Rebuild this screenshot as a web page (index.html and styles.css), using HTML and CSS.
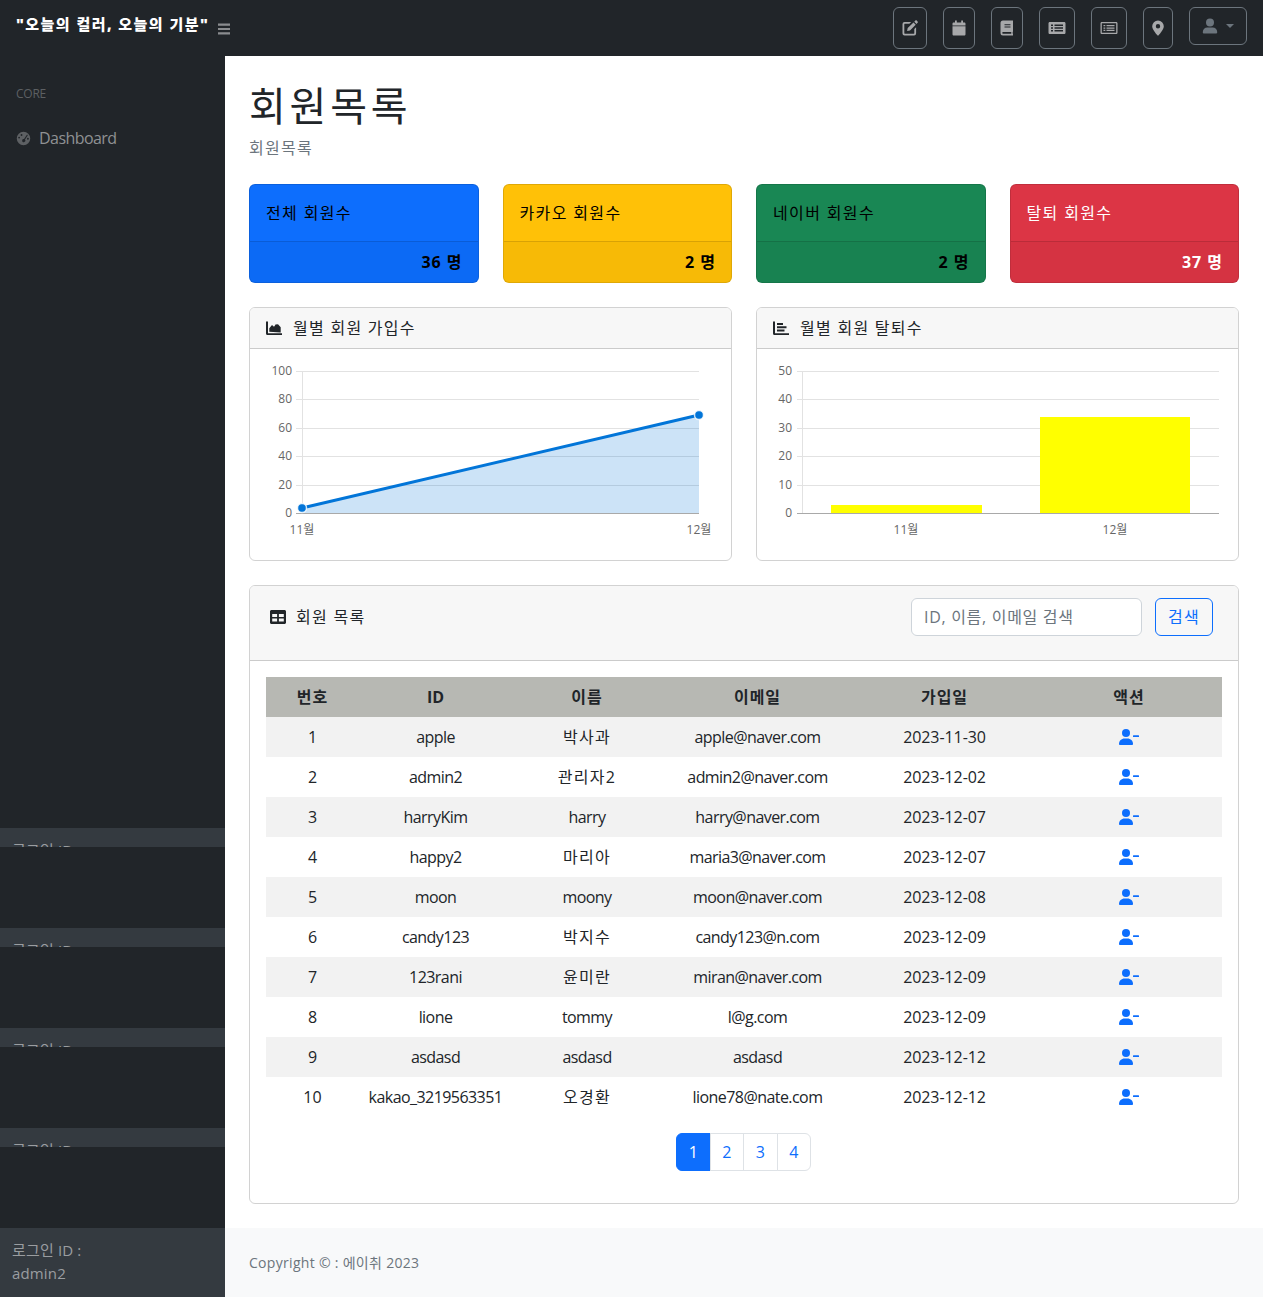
FILE: index.html
```html
<!DOCTYPE html>
<html lang="ko">
<head>
  <meta charset="UTF-8">
  <title>회원목록</title>
  <link rel="stylesheet" href="styles.css">
</head>
<body>
  <header class="topnav">
    <div class="brand">"오늘의 컬러, 오늘의 기분"</div>
    <svg class="toggle" viewBox="0 0 14 14"><path d="M1 1.500h12v2.200H1zM1 5.900h12v2.200H1zM1 10.300h12v2.200H1z"/></svg>
    <div class="nav-icons">
      <a class="nav-btn w34"><svg viewBox="0 0 16 16"><path d="M.5 4A2 2 0 0 1 2.500 2h6.700L7.400 3.800H2.800c-.3 0-.5.200-.5.500v9c0 .3.200.5.500.5h9c.3 0 .5-.2.500-.5V9l1.800-1.800v6A2.300 2.300 0 0 1 11.500 15.500h-9A2 2 0 0 1 .5 13.500zM13.400.6c.4-.4 1-.4 1.300 0l.9.900c.4.400.4 1 0 1.300l-1.100 1.100-2.200-2.200zM11.500 2.500l2.200 2.200L8 10.400l-2.900.6.600-2.900z"/></svg></a>
      <a class="nav-btn w32"><svg viewBox="0 0 16 16"><path d="M4 .5h1.800v2h4.400v-2H12v2h1.200c.8 0 1.300.5 1.300 1.300v1.700h-13V3.800c0-.8.500-1.300 1.300-1.300H4zM1.500 6.300h13v7.900c0 .8-.5 1.300-1.300 1.300H2.800c-.8 0-1.300-.5-1.300-1.300z"/></svg></a>
      <a class="nav-btn w32"><svg viewBox="0 0 16 16"><path fill-rule="evenodd" d="M4 .5h10v11c-.4.400-.4 2 0 2.400v1.600H4a2.500 2.500 0 0 1-2.500-2.500V3A2.500 2.500 0 0 1 4 .5zm1.500 3.700v1.100h6V4.200zm0 2.300v1.100h6V6.500zM4 12c-1 0-1 1.800 0 1.800h8.300c-.1-.6-.1-1.200 0-1.800z"/></svg></a>
      <a class="nav-btn w36"><svg class="wide" viewBox="0 0 18 16"><path fill-rule="evenodd" d="M1.800 2h14.400c.7 0 1.300.6 1.300 1.300v9.400c0 .7-.6 1.300-1.300 1.300H1.800c-.7 0-1.300-.6-1.300-1.300V3.300C.5 2.600 1.100 2 1.800 2zM3 4.500V6h2V4.500zm3.500.1V6h8.500V4.600zM3 7.300v1.500h2V7.300zm3.500 0v1.400h8.500V7.300zM3 10v1.500h2V10zm3.500.1v1.400h8.500v-1.400z"/></svg></a>
      <a class="nav-btn w36"><svg class="wide" viewBox="0 0 18 16"><path fill-rule="evenodd" d="M1.800 2h14.400c.7 0 1.300.6 1.300 1.300v9.400c0 .7-.6 1.300-1.300 1.300H1.800c-.7 0-1.300-.6-1.300-1.300V3.300C.5 2.600 1.100 2 1.800 2zm0 1.200v9.600h14.400V3.200zM3.500 5v1.300h1.800V5zm3 0v1.300h8V5zM3.500 7.400v1.300h1.800V7.400zm3 0v1.300h8V7.400zM3.500 9.800v1.300h1.800V9.800zm3 0v1.300h8V9.800z"/></svg></a>
      <a class="nav-btn w30"><svg viewBox="0 0 16 16"><path fill-rule="evenodd" d="M8 .5a5.800 5.800 0 0 1 5.800 5.800c0 3-3.800 7.500-5.200 9a.8.8 0 0 1-1.200 0c-1.400-1.500-5.200-6-5.200-9A5.800 5.800 0 0 1 8 .5zM8 4a2.200 2.200 0 1 0 0 4.400A2.200 2.200 0 0 0 8 4z"/></svg></a>
      <a class="nav-btn user"><svg class="dim" viewBox="0 0 16 16"><circle cx="8" cy="4.500" r="4"/><path d="M5.300 9.500h5.400c2.500 0 4.500 2 4.500 4.500v.6c0 .5-.4.900-.9.900H1.700c-.5 0-.9-.4-.9-.9V14c0-2.500 2-4.500 4.500-4.500z"/></svg><i class="caret"></i></a>
    </div>
  </header>

  <div class="layout">
    <nav class="sidenav">
      <div class="side-menu">
        <div class="side-heading">CORE</div>
        <a class="side-link">
          <svg viewBox="0 0 16 16"><path fill-rule="evenodd" d="M8 .8a7.200 7.200 0 1 1 0 14.400A7.200 7.200 0 0 1 8 .8zM5.900 3.200a1 1 0 1 0 0 2 1 1 0 0 0 0-2zM3.300 6a1 1 0 1 0 0 2 1 1 0 0 0 0-2zm8.500-2.300L8.600 8.500a1.700 1.700 0 1 0 1 .6l3-4.700zm.9 3.500a1 1 0 1 0 0 2 1 1 0 0 0 0-2z"/></svg>
          Dashboard
        </a>
      </div>
      <div class="side-footer clipped">로그인 ID :</div>
      <div class="side-footer clipped">로그인 ID :</div>
      <div class="side-footer clipped">로그인 ID :</div>
      <div class="side-footer clipped">로그인 ID :</div>
      <div class="side-footer">로그인 ID :<br>admin2</div>
    </nav>

    <div class="content">
      <main class="main">
        <h1>회원목록</h1>
        <p class="crumb">회원목록</p>

        <div class="stat-row">
          <div class="stat blue"><div class="stat-title">전체 회원수</div><div class="stat-foot">36 명</div></div>
          <div class="stat yellow"><div class="stat-title">카카오 회원수</div><div class="stat-foot">2 명</div></div>
          <div class="stat green"><div class="stat-title">네이버 회원수</div><div class="stat-foot">2 명</div></div>
          <div class="stat red"><div class="stat-title">탈퇴 회원수</div><div class="stat-foot">37 명</div></div>
        </div>

        <div class="chart-row">
          <section class="card">
            <div class="card-head">
              <svg class="head-icon" viewBox="0 0 16 16"><path d="M0 1.500h2v11.700h14V15H1.500A1.500 1.500 0 0 1 0 13.500z"/><path d="M3.300 11.800V8.200L6 5l2 1.700 2-2.700 1 .8.800-.8 2.900 3.300v5.300z"/></svg>
              월별 회원 가입수
            </div>
            <div class="chart-box">
              <svg class="chart" viewBox="0 0 481 211">
                <g class="grid">
                  <path d="M46 22.500H449M46 50.500H449M46 79.500H449M46 107.500H449M46 136.500H449"/>
                  <path d="M52.500 22V164"/>
                </g>
                <path class="area" d="M52 159L449 66V164.500H52z"/>
                <path class="axis" d="M46 164.500H449"/>
                <path class="line" d="M52 159L449 66"/>
                <circle class="dot" cx="52" cy="159" r="4.500"/>
                <circle class="dot" cx="449" cy="66" r="4.500"/>
                <g class="tick tick-y">
                  <text x="42" y="26">100</text><text x="42" y="54">80</text><text x="42" y="83">60</text>
                  <text x="42" y="111">40</text><text x="42" y="140">20</text><text x="42" y="168">0</text>
                </g>
                <g class="tick tick-x"><text x="52" y="185">11월</text><text x="449" y="185">12월</text></g>
              </svg>
            </div>
          </section>

          <section class="card">
            <div class="card-head">
              <svg class="head-icon" viewBox="0 0 16 16"><path d="M0 1.500h2v11.700h14V15H1.500A1.500 1.500 0 0 1 0 13.500z"/><path d="M4 3h6v2H4zM4 6.300h9.500v2H4zM4 9.600h7.500v2H4z"/></svg>
              월별 회원 탈퇴수
            </div>
            <div class="chart-box">
              <svg class="chart" viewBox="0 0 481 211">
                <g class="grid">
                  <path d="M40 22.500H462M40 50.500H462M40 79.500H462M40 107.500H462M40 136.500H462"/>
                  <path d="M45.500 22V164"/>
                </g>
                <rect class="bar" x="74" y="156" width="151" height="8"/>
                <rect class="bar" x="283" y="68" width="150" height="96"/>
                <path class="axis" d="M40 164.500H462"/>
                <g class="tick tick-y">
                  <text x="35" y="26">50</text><text x="35" y="54">40</text><text x="35" y="83">30</text>
                  <text x="35" y="111">20</text><text x="35" y="140">10</text><text x="35" y="168">0</text>
                </g>
                <g class="tick tick-x"><text x="149" y="185">11월</text><text x="358" y="185">12월</text></g>
              </svg>
            </div>
          </section>
        </div>

        <section class="card member-card">
          <div class="member-head">
            <div class="member-title">
              <svg class="head-icon" viewBox="0 0 16 16"><path fill-rule="evenodd" d="M1.500 1h13c.8 0 1.500.7 1.500 1.500v11c0 .8-.7 1.500-1.500 1.500h-13C.7 15 0 14.300 0 13.500v-11C0 1.700.7 1 1.500 1zM2.200 5v2.900h4.900V5zm6.700 0v2.900h4.900V5zM2.200 9.400v3.200h4.900V9.400zm6.700 0v3.200h4.900V9.400z"/></svg>
              회원 목록
            </div>
            <form class="search">
              <input class="search-input" type="text" placeholder="ID, 이름, 이메일 검색">
              <button class="search-btn" type="button">검색</button>
            </form>
          </div>
          <div class="member-body">
            <table class="member-table">
              <thead>
                <tr><th>번호</th><th class="th-latin">ID</th><th>이름</th><th>이메일</th><th>가입일</th><th>액션</th></tr>
              </thead>
              <tbody id="rows"></tbody>
            </table>
            <ul class="pager">
              <li class="active">1</li><li>2</li><li>3</li><li>4</li>
            </ul>
          </div>
        </section>
      </main>

      <footer class="footer">Copyright © : 에이취 2023</footer>
    </div>
  </div>

  <script src="rows.js"></script>
</body>
</html>
```

FILE: rows.js
```js
const members = [
  ['apple', '박사과', 'apple@naver.com', '2023-11-30'],
  ['admin2', '관리자2', 'admin2@naver.com', '2023-12-02'],
  ['harryKim', 'harry', 'harry@naver.com', '2023-12-07'],
  ['happy2', '마리아', 'maria3@naver.com', '2023-12-07'],
  ['moon', 'moony', 'moon@naver.com', '2023-12-08'],
  ['candy123', '박지수', 'candy123@n.com', '2023-12-09'],
  ['123rani', '윤미란', 'miran@naver.com', '2023-12-09'],
  ['lione', 'tommy', 'l@g.com', '2023-12-09'],
  ['asdasd', 'asdasd', 'asdasd', '2023-12-12'],
  ['kakao_3219563351', '오경환', 'lione78@nate.com', '2023-12-12']
];

const userMinus = '<svg class="user-minus" viewBox="0 0 20 16"><circle cx="7" cy="4" r="4"/><path d="M5.500 9.500h3c3 0 5.500 2.300 5.500 5.500 0 .5-.4 1-1 1H1c-.6 0-1-.5-1-1 0-3.200 2.500-5.500 5.500-5.500z"/><rect x="14" y="6.200" width="6" height="1.700" rx=".5"/></svg>';

// 한글이 들어간 칸은 자간을 따로 준다
const nameCell = name => `<td class="${/[가-힣]/.test(name) ? 'ko' : 'latin'}">${name}</td>`;

document.getElementById('rows').innerHTML = members.map((m, i) => `
  <tr>
    <td>${i + 1}</td><td class="latin">${m[0]}</td>${nameCell(m[1])}<td class="latin">${m[2]}</td><td class="date">${m[3]}</td><td>${userMinus}</td>
  </tr>`).join('');
```

FILE: styles.css
```css
* {
  margin: 0;
  padding: 0;
  box-sizing: border-box;
}

body {
  font-family: "Open Sans", "Noto Sans CJK KR", sans-serif;
  font-size: 16px;
  line-height: 1.5;
  color: #212529;
  background: #fff;
}

/* top bar */
.topnav {
  height: 56px;
  background: #212529;
  display: flex;
  align-items: center;
  padding-left: 16px;
}

.brand {
  width: 193px;
  font-size: 15px;
  font-weight: 900;
  letter-spacing: 1.45px;
  color: #fff;
  white-space: nowrap;
  margin-top: -8px;
}

.toggle {
  width: 14px;
  height: 14px;
  fill: #8a8c8f;
  margin-left: 8px;
  margin-top: 1px;
}

.nav-icons {
  margin-left: auto;
  margin-right: 16px;
  display: flex;
  gap: 16px;
  align-items: flex-start;
}

.nav-btn {
  height: 42px;
  border: 1px solid #6c757d;
  border-radius: 6px;
  display: flex;
  align-items: center;
  justify-content: center;
}

.nav-btn svg {
  width: 16px;
  height: 16px;
  fill: #a7a8aa;
}

.nav-btn svg.wide {
  width: 18px;
}

.nav-btn svg.dim {
  fill: #6c757d;
}

.w30 { width: 30px; }
.w32 { width: 32px; }
.w34 { width: 34px; }
.w36 { width: 36px; }

.nav-btn.user {
  width: 58px;
  height: 38px;
  gap: 8px;
}

.caret {
  width: 0;
  height: 0;
  border-left: 4px solid transparent;
  border-right: 4px solid transparent;
  border-top: 4px solid #6c757d;
}

.layout {
  display: flex;
  height: 1241px;
}

/* sidebar */
.sidenav {
  width: 225px;
  flex: none;
  background: #212529;
  display: flex;
  flex-direction: column;
}

.side-menu {
  height: 772px;
  padding-top: 29px;
}

.side-heading {
  padding-left: 16px;
  font-size: 12px;
  line-height: 18px;
  color: #5d6063;
  letter-spacing: -.02em;
}

.side-link {
  display: flex;
  align-items: center;
  gap: 8px;
  padding: 23px 16px 0;
  color: #8f9193;
  line-height: 24px;
  letter-spacing: -.035em;
}

.side-link svg {
  width: 15px;
  height: 15px;
  fill: #5d6063;
}

.side-footer {
  height: 69px;
  background: #343a40;
  color: #9a9da0;
  padding: 11px 12px 0;
  line-height: 22.5px;
  font-size: 15px;
  letter-spacing: .01em;
}

.side-footer.clipped {
  height: 19px;
  margin-bottom: 81px;
  overflow: hidden;
}

/* main column */
.content {
  flex: 1;
  min-width: 0;
  display: flex;
  flex-direction: column;
}

.main {
  flex: 1;
  padding: 0 24px;
}

h1 {
  font-size: 40px;
  font-weight: 400;
  line-height: 48px;
  margin-top: 26px;
  letter-spacing: .095em;
}

.crumb {
  color: #6c757d;
  line-height: 24px;
  margin-top: 6px;
  letter-spacing: .08em;
}

.stat-row,
.chart-row {
  display: grid;
  gap: 24px;
}

.stat-row {
  grid-template-columns: repeat(4, 1fr);
  margin-top: 24px;
}

.chart-row {
  grid-template-columns: repeat(2, 1fr);
  margin-top: 24px;
}

.stat {
  height: 99px;
  border: 1px solid rgba(0, 0, 0, .125);
  border-radius: 6px;
  color: #000;
  overflow: hidden;
}

.stat.blue { background: #0d6efd; }
.stat.green { background: #198754; }
.stat.yellow { background: #ffc107; }
.stat.red { background: #dc3545; color: #fff; }

.stat-title {
  height: 56px;
  padding: 16px;
  line-height: 24px;
  letter-spacing: .085em;
}

.stat-foot {
  height: 42px;
  border-top: 1px solid rgba(0, 0, 0, .125);
  background: rgba(0, 0, 0, .03);
  padding: 8px 15px 8px 16px;
  text-align: right;
  font-weight: 700;
  line-height: 24px;
  letter-spacing: .06em;
}

.card {
  border: 1px solid rgba(0, 0, 0, .175);
  border-radius: 6px;
  overflow: hidden;
}

.card-head {
  height: 41px;
  background: #f7f7f7;
  border-bottom: 1px solid rgba(0, 0, 0, .175);
  padding: 8px 16px;
  display: flex;
  align-items: center;
  gap: 11px;
  line-height: 24px;
  letter-spacing: .08em;
}

.head-icon {
  width: 16px;
  height: 16px;
  fill: #212529;
  flex: none;
}

.chart-box {
  height: 211px;
}

.chart {
  display: block;
  width: 100%;
  height: 211px;
}

.grid path {
  stroke: #e2e2e2;
  stroke-width: 1;
  fill: none;
}

.axis {
  stroke: #a9a9a9;
  stroke-width: 1;
  fill: none;
}

.area {
  fill: rgba(2, 117, 216, .2);
}

.line {
  stroke: #0275d8;
  stroke-width: 3;
  fill: none;
}

.dot {
  fill: #0275d8;
  stroke: rgba(255, 255, 255, .8);
  stroke-width: 1.5;
}

.bar {
  fill: #ffff00;
}

.tick text {
  font-size: 12px;
  fill: #666;
}

.tick-y text {
  text-anchor: end;
}

.tick-x text {
  text-anchor: middle;
}

/* member table */
.member-card {
  margin-top: 24px;
  height: 619px;
}

.member-head {
  height: 75px;
  background: #f7f7f7;
  border-bottom: 1px solid rgba(0, 0, 0, .175);
  display: flex;
  justify-content: space-between;
  padding: 12px 25px 0 20px;
}

.member-title {
  display: flex;
  align-items: center;
  gap: 10px;
  height: 38px;
  letter-spacing: .08em;
}

.search {
  display: flex;
  gap: 13px;
}

.search-input {
  width: 231px;
  height: 38px;
  border: 1px solid #ced4da;
  border-radius: 6px;
  padding: 6px 12px;
  font: inherit;
  letter-spacing: .7px;
  color: #212529;
  background: #fff;
}

.search-input::placeholder {
  color: #6c757d;
}

.search-btn {
  width: 58px;
  height: 38px;
  border: 1px solid #0d6efd;
  border-radius: 6px;
  background: transparent;
  color: #0d6efd;
  font: inherit;
  letter-spacing: .08em;
}

.member-body {
  padding: 16px;
}

.member-table {
  width: 956px;
  border-collapse: collapse;
  table-layout: fixed;
  text-align: center;
}

.member-table th {
  height: 40px;
  background: #b7b8b3;
  font-weight: 700;
  letter-spacing: .06em;
}

.member-table th.th-latin {
  letter-spacing: 0;
}

.member-table td {
  height: 40px;
}

.member-table td.latin {
  letter-spacing: -.035em;
}

.member-table td.ko {
  letter-spacing: .08em;
}

.member-table td.date {
  letter-spacing: -.005em;
}

.member-table th:nth-child(1) { width: 93px; }
.member-table th:nth-child(2) { width: 153px; }
.member-table th:nth-child(3) { width: 150px; }
.member-table th:nth-child(4) { width: 191px; }
.member-table th:nth-child(5) { width: 183px; }

.member-table tbody tr:nth-child(odd) {
  background: #f2f2f2;
}

.user-minus {
  width: 20px;
  height: 16px;
  fill: #0d6efd;
  display: block;
  margin: 0 auto;
}

.pager {
  list-style: none;
  display: flex;
  justify-content: center;
  margin-top: 16px;
  padding-right: 1px;
}

.pager li {
  width: 34.500px;
  height: 38px;
  padding: 6px 0;
  text-align: center;
  border: 1px solid #dee2e6;
  margin-left: -1px;
  color: #0d6efd;
  background: #fff;
}

.pager li:first-child {
  margin-left: 0;
  border-radius: 6px 0 0 6px;
}

.pager li:last-child {
  border-radius: 0 6px 6px 0;
}

.pager li.active {
  background: #0d6efd;
  border-color: #0d6efd;
  color: #fff;
}

.footer {
  height: 69px;
  background: #f8f9fa;
  padding: 0 24px;
  display: flex;
  align-items: center;
  font-size: 14px;
  letter-spacing: .3px;
  color: #6c757d;
}
```
